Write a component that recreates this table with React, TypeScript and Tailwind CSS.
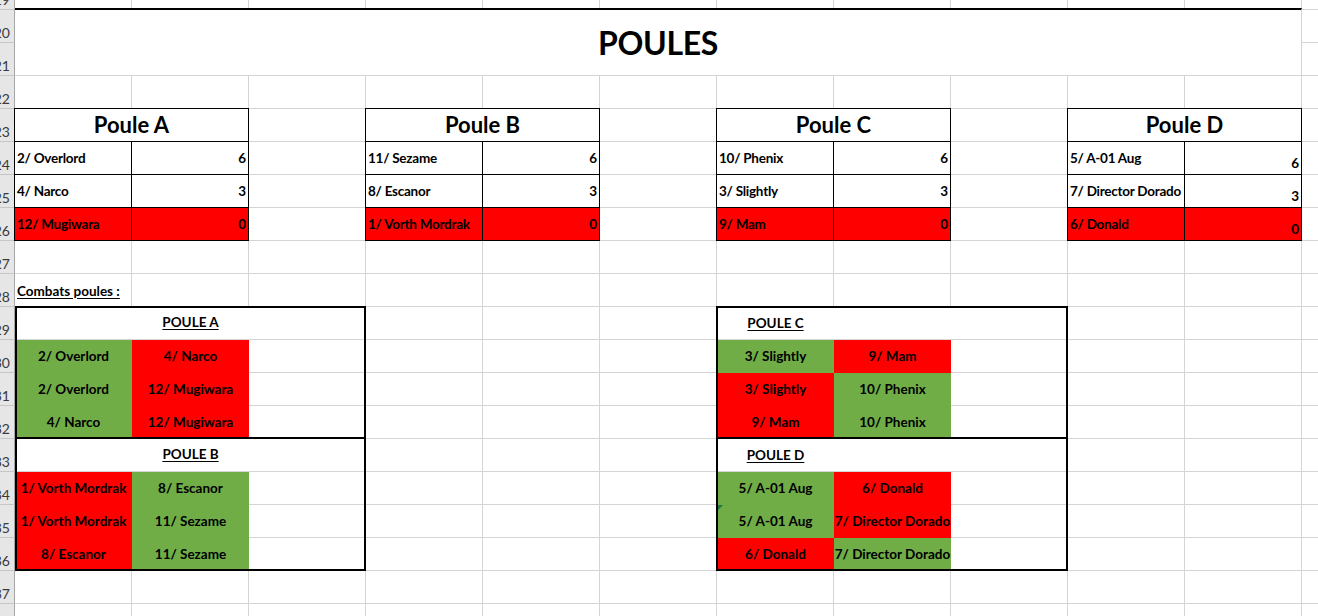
import React from "react";

const GRID =
  "grid grid-cols-[15px_repeat(11,117px)_17px] grid-rows-[10px_repeat(18,33px)_13px]";

const RED = "bg-[#ff0000]";
const GREEN = "bg-[#70ad47]";

function Background() {
  const cells: React.ReactNode[] = [];
  for (let r = 0; r < 20; r++) {
    for (let c = 0; c < 13; c++) {
      const key = `${r}-${c}`;
      if (c === 0) {
        cells.push(
          <div
            key={key}
            className="bg-[#e6e6e6] border-r border-b border-r-[#a6a6a6] border-b-[#c6c6c6] overflow-hidden flex items-end justify-end pr-[4px] pb-[2px] text-[14px] leading-none text-[#3a3a3a] font-normal"
          >
            {r < 19 ? r + 19 : ""}
          </div>
        );
      } else {
        cells.push(
          <div key={key} className="bg-white border-r border-b border-[#d4d4d4]" />
        );
      }
    }
  }
  return <div className={`${GRID} col-start-1 row-start-1`}>{cells}</div>;
}

type Row = [string, string, boolean];

const POULES: {
  title: string;
  span: string;
  c1: string;
  c2: string;
  bottomNums?: boolean;
  rows: Row[];
}[] = [
  {
    title: "Poule A",
    span: "col-start-2 col-span-2",
    c1: "col-start-2",
    c2: "col-start-3",
    rows: [
      ["2/ Overlord", "6", false],
      ["4/ Narco", "3", false],
      ["12/ Mugiwara", "0", true],
    ],
  },
  {
    title: "Poule B",
    span: "col-start-5 col-span-2",
    c1: "col-start-5",
    c2: "col-start-6",
    rows: [
      ["11/ Sezame", "6", false],
      ["8/ Escanor", "3", false],
      ["1/ Vorth Mordrak", "0", true],
    ],
  },
  {
    title: "Poule C",
    span: "col-start-8 col-span-2",
    c1: "col-start-8",
    c2: "col-start-9",
    rows: [
      ["10/ Phenix", "6", false],
      ["3/ Slightly", "3", false],
      ["9/ Mam", "0", true],
    ],
  },
  {
    title: "Poule D",
    span: "col-start-11 col-span-2",
    c1: "col-start-11",
    c2: "col-start-12",
    bottomNums: true,
    rows: [
      ["5/ A-01 Aug", "6", false],
      ["7/ Director Dorado", "3", false],
      ["6/ Donald", "0", true],
    ],
  },
];

const TABLE_ROWS = ["row-start-6", "row-start-7", "row-start-8"];

function PouleTable({ p }: { p: (typeof POULES)[number] }) {
  return (
    <>
      <div
        className={`${p.span} row-start-5 -mt-px -ml-px border border-black bg-white flex items-center justify-center text-[22px] font-bold leading-none pb-[1px]`}
      >
        {p.title}
      </div>
      {p.rows.map((r, i) => (
        <React.Fragment key={i}>
          <div
            className={`${p.c1} ${TABLE_ROWS[i]} -mt-px -ml-px border border-black ${
              r[2] ? RED : "bg-white"
            } flex items-center pl-[2px] whitespace-nowrap text-[13.5px] font-bold leading-none tracking-[-0.25px] pt-[1px]`}
          >
            {r[0]}
          </div>
          <div
            className={`${p.c2} ${TABLE_ROWS[i]} -mt-px -ml-px border border-black ${
              r[2] ? RED : "bg-white"
            } flex ${p.bottomNums ? "items-end pb-[4px]" : "items-center pt-[1px]"} justify-end pr-[2px] text-[13.5px] font-bold leading-none`}
          >
            {r[1]}
          </div>
        </React.Fragment>
      ))}
    </>
  );
}

type Fight = [[string, boolean], [string, boolean]];

function CombatRows({
  fights,
  c1,
  c2,
  rows,
}: {
  fights: Fight[];
  c1: string;
  c2: string;
  rows: string[];
}) {
  return (
    <>
      {fights.map((f, i) => (
        <React.Fragment key={i}>
          <div
            className={`${c1} ${rows[i]} ${
              f[0][1] ? GREEN : RED
            } flex items-center justify-center whitespace-nowrap text-[13.5px] font-bold leading-none`}
          >
            {f[0][0]}
          </div>
          <div
            className={`${c2} ${rows[i]} ${
              f[1][1] ? GREEN : RED
            } flex items-center justify-center whitespace-nowrap text-[13.5px] font-bold leading-none`}
          >
            {f[1][0]}
          </div>
        </React.Fragment>
      ))}
    </>
  );
}

const G = true;
const R = false;

export default function App() {
  return (
    <div className="w-[1318px] h-[616px] overflow-hidden bg-white font-[Lato,'Open_Sans',sans-serif] text-black">
      <div className="grid">
        <Background />
        <div className={`${GRID} col-start-1 row-start-1`}>
          {/* Title */}
          <div className="col-start-2 col-span-11 row-start-2 row-span-2 -mt-[2px] bg-white border-t-2 border-t-black border-r border-b border-r-[#d4d4d4] border-b-[#d4d4d4] flex items-center justify-center">
            <span className="text-[32px] font-bold leading-none tracking-[-0.3px]">POULES</span>
          </div>

          {POULES.map((p) => (
            <PouleTable key={p.title} p={p} />
          ))}

          {/* Combats label */}
          <div className="col-start-2 col-span-2 row-start-10 flex items-end pb-[9px] pl-[2px]">
            <span className="text-[13.5px] font-bold leading-none underline underline-offset-2 whitespace-nowrap">
              Combats poules :
            </span>
          </div>

          {/* Box 1: Poule A / Poule B */}
          <div className="col-start-2 col-span-3 row-start-11 bg-white border-b border-[#d4d4d4] flex items-center justify-center">
            <span className="text-[13.5px] font-bold leading-none underline underline-offset-2">POULE A</span>
          </div>
          <CombatRows
            c1="col-start-2"
            c2="col-start-3"
            rows={["row-start-12", "row-start-13", "row-start-14"]}
            fights={[
              [["2/ Overlord", G], ["4/ Narco", R]],
              [["2/ Overlord", G], ["12/ Mugiwara", R]],
              [["4/ Narco", G], ["12/ Mugiwara", R]],
            ]}
          />
          <div className="col-start-2 col-span-3 row-start-15 bg-white border-b border-[#d4d4d4] flex items-center justify-center">
            <span className="text-[13.5px] font-bold leading-none underline underline-offset-2">POULE B</span>
          </div>
          <CombatRows
            c1="col-start-2"
            c2="col-start-3"
            rows={["row-start-16", "row-start-17", "row-start-18"]}
            fights={[
              [["1/ Vorth Mordrak", R], ["8/ Escanor", G]],
              [["1/ Vorth Mordrak", R], ["11/ Sezame", G]],
              [["8/ Escanor", R], ["11/ Sezame", G]],
            ]}
          />
          <div className="col-start-2 col-span-3 row-start-14 border-b-2 border-black z-10 pointer-events-none" />
          <div className="col-start-2 col-span-3 row-start-11 row-span-8 -mt-px border-2 border-black z-10 pointer-events-none" />

          {/* Box 2: Poule C / Poule D */}
          <div className="col-start-8 col-span-3 row-start-11 bg-white border-b border-[#d4d4d4]" />
          <div className="col-start-8 row-start-11 flex items-center justify-center z-[1]">
            <span className="text-[13.5px] font-bold leading-none underline underline-offset-2">POULE C</span>
          </div>
          <CombatRows
            c1="col-start-8"
            c2="col-start-9"
            rows={["row-start-12", "row-start-13", "row-start-14"]}
            fights={[
              [["3/ Slightly", G], ["9/ Mam", R]],
              [["3/ Slightly", R], ["10/ Phenix", G]],
              [["9/ Mam", R], ["10/ Phenix", G]],
            ]}
          />
          <div className="col-start-8 col-span-3 row-start-15 bg-white border-b border-[#d4d4d4]" />
          <div className="col-start-8 row-start-15 flex items-center justify-center z-[1]">
            <span className="text-[13.5px] font-bold leading-none underline underline-offset-2">POULE D</span>
          </div>
          <CombatRows
            c1="col-start-8"
            c2="col-start-9"
            rows={["row-start-16", "row-start-17", "row-start-18"]}
            fights={[
              [["5/ A-01 Aug", G], ["6/ Donald", R]],
              [["5/ A-01 Aug", G], ["7/ Director Dorado", R]],
              [["6/ Donald", R], ["7/ Director Dorado", G]],
            ]}
          />
          {/* error indicator triangle */}
          <div className="col-start-8 row-start-17 relative z-[2] pointer-events-none">
            <div className="absolute left-0 top-0 w-0 h-0 border-t-[6px] border-t-[#217346] border-r-[6px] border-r-transparent" />
          </div>
          <div className="col-start-8 col-span-3 row-start-14 border-b-2 border-black z-10 pointer-events-none" />
          <div className="col-start-8 col-span-3 row-start-11 row-span-8 -mt-px -ml-px border-2 border-black z-10 pointer-events-none" />
        </div>
      </div>
    </div>
  );
}
